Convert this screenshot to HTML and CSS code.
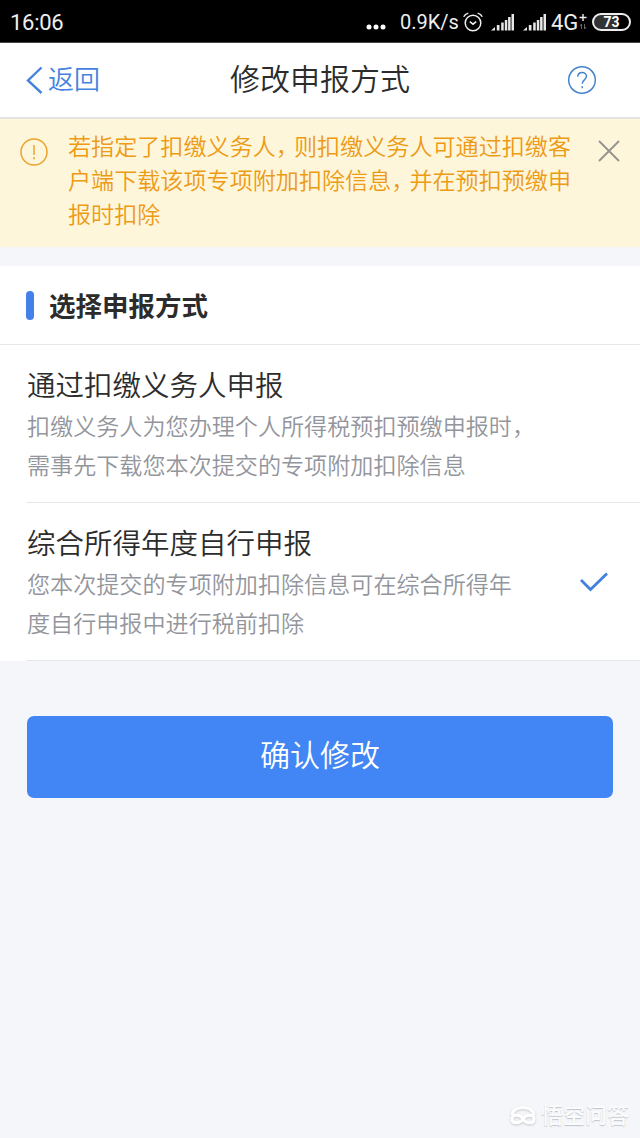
FILE: index.html
```
<!DOCTYPE html>
<html lang="zh-CN">
<head>
  <meta charset="UTF-8">
  <meta name="viewport" content="width=device-width, initial-scale=1.0">
  <title>修改申报方式</title>
  <link rel="stylesheet" href="styles.css">
</head>
<body>

<div class="status-bar">
  <span class="time">16:06</span>
  <svg class="dots" width="20" height="6" viewBox="0 0 20 6" fill="#fff">
    <circle cx="3" cy="3" r="2.5"/><circle cx="10" cy="3" r="2.5"/><circle cx="17" cy="3" r="2.5"/>
  </svg>
  <span class="speed">0.9K/s</span>
  <svg class="alarm" width="20" height="20" viewBox="0 0 20 20" fill="none" stroke="#eee" stroke-width="1.5">
    <circle cx="10" cy="11" r="7.8"/>
    <path d="M6.8 9.6l3.2 2.6 3.2-2.6M.7 4.8Q2 2 5.3 1.1M19.3 4.8Q18 2 14.7 1.1"/>
  </svg>
  <svg class="signal" width="24" height="17" viewBox="0 0 24 17" fill="#e8e8e8">
    <path d="M0 16.5L4 13v3.500zM5.800 11h2.700v5.500H5.800zM10.200 8.500h2.500v8h-2.500zM13.800 6h2.500v10.500h-2.500zM17.100 3h2.500v13.500h-2.500zM20.500 0H23v16.500h-2.500z"/>
  </svg>
  <svg class="signal signal-two" width="24" height="17" viewBox="0 0 24 17" fill="#e8e8e8">
    <path d="M0 16.5L4 13v3.500zM5.800 11h2.700v5.500H5.800zM10.200 8.500h2.500v8h-2.500zM13.800 6h2.500v10.500h-2.500zM17.100 3h2.500v13.500h-2.500zM20.500 0H23v16.500h-2.500z"/>
  </svg>
  <span class="network">4G</span>
  <svg class="plus" width="8" height="16" viewBox="0 0 8 16" fill="none">
    <path d="M4 0v7M.5 3.500h7" stroke="#eee" stroke-width="1.400"/>
    <path d="M2.500 15v-5L1 12M5.500 10v5L7 13" stroke="#666"/>
  </svg>
  <span class="battery">73</span>
</div>

<div class="nav">
  <div class="back">
    <svg width="17" height="28" viewBox="0 0 17 28" fill="none" stroke="#4583df" stroke-width="2.400">
      <path d="M15.500 1.500L2 14.500l13.500 12.500"/>
    </svg>
    <span>返回</span>
  </div>
  <h1>修改申报方式</h1>
  <svg class="help" width="30" height="30" viewBox="0 0 30 30" fill="none" stroke="#4583cf" stroke-width="1.500">
    <circle cx="15" cy="15" r="13.300"/>
    <path d="M10.800 11.800c0-5.600 8.700-5.500 8.700-.5 0 3.500-4.300 3.600-4.300 7.400M15.200 21.300v2"/>
  </svg>
</div>

<div class="notice">
  <svg class="warn" width="28" height="28" viewBox="0 0 28 28" fill="none" stroke="#eba42c" stroke-width="1.500">
    <circle cx="14" cy="14" r="13"/>
    <path d="M14 7v10M14 19v2.200"/>
  </svg>
  <p>若指定了扣缴义务人<i>，</i>则扣缴义务人可通过扣缴客<br>户端下载该项专项附加扣除信息<i>，</i>并在预扣预缴申<br>报时扣除</p>
  <svg class="close" width="22" height="22" viewBox="0 0 22 22" fill="none" stroke="#95938f" stroke-width="1.900">
    <path d="M1 1l20 20M21 1L1 21"/>
  </svg>
</div>

<div class="card">
  <h2>选择申报方式</h2>
  <div class="option">
    <div class="option-text">
      <h3>通过扣缴义务人申报</h3>
      <p>扣缴义务人为您办理个人所得税预扣预缴申报时，<br>需事先下载您本次提交的专项附加扣除信息</p>
    </div>
  </div>
  <div class="option">
    <div class="option-text">
      <h3>综合所得年度自行申报</h3>
      <p>您本次提交的专项附加扣除信息可在综合所得年<br>度自行申报中进行税前扣除</p>
    </div>
    <svg class="check" width="28" height="20" viewBox="0 0 28 20" fill="none" stroke="#4280dc" stroke-width="2.800">
      <path d="M1 8l9.500 9.500L27 1.500"/>
    </svg>
  </div>
</div>

<button class="confirm">确认修改</button>

<div class="watermark">
  <svg width="28" height="22" viewBox="0 0 28 22" fill="none" stroke="#fff" stroke-width="3">
    <path d="M3 10C5 0 23 0 25 10"/>
    <path d="M14 14c-3-5-11-5-11 0s8 5 11 0 11-5 11 0-8 5-11 0z"/>
  </svg>
  <span>悟空问答</span>
</div>

</body>
</html>
```

FILE: styles.css
```
* {
  box-sizing: border-box;
}

body {
  margin: 0;
  min-height: 1138px;
  display: flex;
  flex-direction: column;
  background: #f4f6fa;
  color: #2c2c2c;
  font-family: Roboto, "Noto Sans CJK SC", sans-serif;
  font-weight: 350;
}

h1, h2, h3, p {
  margin: 0;
  font-weight: 350;
}

svg {
  flex: none;
}

/* barra de estado */
.status-bar {
  display: flex;
  align-items: center;
  height: 43px;
  padding: 2px 9px 0 10px;
  background: #000;
  border-bottom: 1px solid #444;
  color: #eee;
  font-size: 22px;
  font-weight: 400;
}

.time {
  margin-right: auto;
  letter-spacing: -0.3px;
}

.dots {
  margin: 10px 14px 0 0;
}

.speed {
  width: 63px;
  font-size: 20px;
}

.signal {
  margin-left: 8px;
}

.signal-two {
  margin-right: 4px;
}

.network {
  width: 28px;
}

.plus {
  margin-right: 5px;
}

.battery {
  width: 39px;
  height: 18px;
  border: 2px solid #eee;
  border-radius: 9px;
  background: linear-gradient(to right, #333 70%, #000 70%);
  color: #fff;
  font-size: 14px;
  font-weight: 700;
  line-height: 15px;
  text-align: center;
}

/* cabecera */
.nav {
  display: grid;
  grid-template-columns: 1fr auto 1fr;
  align-items: center;
  height: 76px;
  padding: 0 43px;
  background: #fff;
  border-bottom: 2px solid #e4e3e2;
}

.back {
  display: flex;
  align-items: center;
  gap: 5px;
  margin-left: -17px;
  color: #4583df;
  font-size: 26px;
  line-height: 34px;
}

.nav h1 {
  font-size: 30px;
  line-height: 40px;
}

.help {
  justify-self: end;
}

/* aviso */
.notice {
  display: flex;
  align-items: flex-start;
  height: 128px;
  padding: 12px 20px 0 20px;
  background: #fef6da;
  color: #ed9a15;
}

.warn {
  margin: 7px 20px 0 0;
}

.notice p {
  flex: 1;
  font-size: 23.1px;
  line-height: 34px;
  white-space: nowrap;
}

.notice i {
  font-style: normal;
  letter-spacing: -5px;
}

.close {
  margin-top: 9px;
}

/* opciones */
.card {
  margin-top: 19px;
  background: #fff;
}

.card h2 {
  display: flex;
  align-items: center;
  height: 79px;
  padding: 0 0 2px 26px;
  border-bottom: 1px solid #e8e8e8;
  font-size: 26.5px;
  font-weight: 700;
}

.card h2::before {
  content: "";
  width: 8px;
  height: 29px;
  margin: 2px 15px 0 0;
  border-radius: 4px;
  background: #4380ea;
}

.option {
  display: flex;
  align-items: center;
  justify-content: space-between;
  height: 158px;
  margin-left: 26px;
  padding: 0 32px 0 1px;
  border-bottom: 1px solid #e6e7e8;
}

.option-text {
  padding-top: 4px;
}

.option h3 {
  font-size: 28.5px;
  line-height: 42px;
}

.option p {
  color: #93959c;
  font-size: 23.1px;
  line-height: 39px;
}

.confirm {
  height: 82px;
  margin: 55px 27px 0;
  padding: 0 0 9px;
  border: 0;
  border-radius: 7px;
  background: #4285f5;
  color: #fff;
  font-family: inherit;
  font-size: 30px;
  font-weight: 350;
}

/* marca de agua */
.watermark {
  display: flex;
  align-items: center;
  align-self: flex-end;
  gap: 4px;
  margin: auto 11px 7px 0;
  color: #fbfcfd;
  font-size: 22px;
  font-weight: 500;
  line-height: 30px;
  text-shadow: 0 1px 1px #c4c4c8;
}

.watermark svg {
  filter: drop-shadow(0 1px 1px #c8c8cc);
}
```
